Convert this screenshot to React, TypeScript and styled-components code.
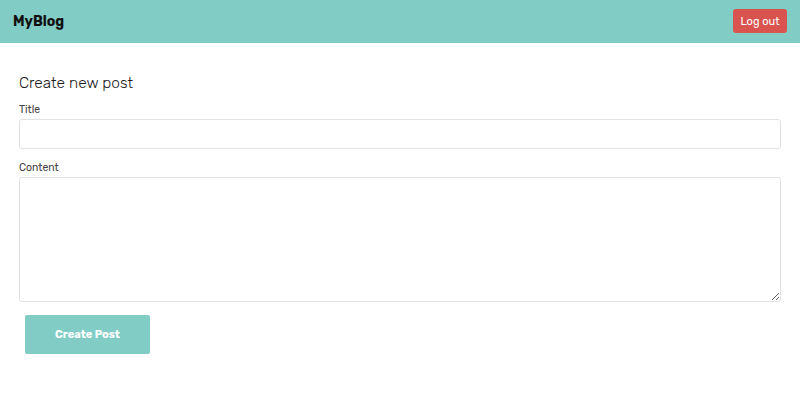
import React, { useState } from 'react'
import styled, { createGlobalStyle } from 'styled-components'

const GlobalStyle = createGlobalStyle`
  body {
    margin: 0;
    font-family: Rubik, 'Noto Sans', 'Open Sans', sans-serif;
    background: #fff;
    color: #222;
  }
`

export default function App () {
  const [title, setTitle] = useState('')
  const [content, setContent] = useState('')

  const handleSubmit = (event: React.FormEvent) => {
    event.preventDefault()
  }

  return (
    <>
      <GlobalStyle />
      <Header>
        <Brand>MyBlog</Brand>
        <LogoutButton type='button'>Log out</LogoutButton>
      </Header>
      <Main>
        <Title>Create new post</Title>
        <Form onSubmit={handleSubmit}>
          <Field>
            <Label htmlFor='title'>Title</Label>
            <Input id='title' value={title} onChange={e => setTitle(e.target.value)} />
          </Field>
          <Field>
            <Label htmlFor='content'>Content</Label>
            <TextArea id='content' value={content} onChange={e => setContent(e.target.value)} />
          </Field>
          <SubmitButton type='submit'>Create Post</SubmitButton>
        </Form>
      </Main>
    </>
  )
}

const Header = styled.header`
  height: 43px;
  background: #81cdc6;
  display: flex;
  align-items: center;
  justify-content: space-between;
  padding: 0 13px 0 13px;
  box-sizing: border-box;
`

const Brand = styled.div`
  font-weight: 700;
  font-size: 14px;
  color: #111;
`

const LogoutButton = styled.button`
  background: #d9534f;
  color: #fff;
  border: none;
  border-radius: 3px;
  height: 24px;
  width: 54px;
  padding: 0;
  margin-top: -1px;
  font-family: inherit;
  font-size: 11px;
  cursor: pointer;
`

const Main = styled.main`
  padding: 31px 19px 0 19px;
`

const Title = styled.h2`
  margin: 0 0 11px;
  font-size: 15.5px;
  line-height: 19px;
  font-weight: 300;
  color: #1a1a1a;
`

const Form = styled.form`
  display: flex;
  flex-direction: column;
`

const Field = styled.div`
  display: flex;
  flex-direction: column;
  margin-bottom: 13px;
`

const Label = styled.label`
  font-size: 10.5px;
  line-height: 12px;
  color: #444;
  margin-bottom: 3px;
`

const Input = styled.input`
  height: 30px;
  box-sizing: border-box;
  border: 1px solid #e2e2e2;
  border-radius: 3px;
  padding: 4px 8px;
  font-family: inherit;
  outline: none;
`

const TextArea = styled.textarea`
  height: 125px;
  box-sizing: border-box;
  border: 1px solid #e2e2e2;
  border-radius: 3px;
  padding: 4px 8px;
  font-family: inherit;
  outline: none;
`

const SubmitButton = styled.button`
  align-self: flex-start;
  margin-left: 6px;
  width: 125px;
  height: 39px;
  background: #81cdc6;
  color: #fff;
  border: none;
  border-radius: 2px;
  font-family: inherit;
  font-weight: 700;
  font-size: 11px;
  cursor: pointer;
`
